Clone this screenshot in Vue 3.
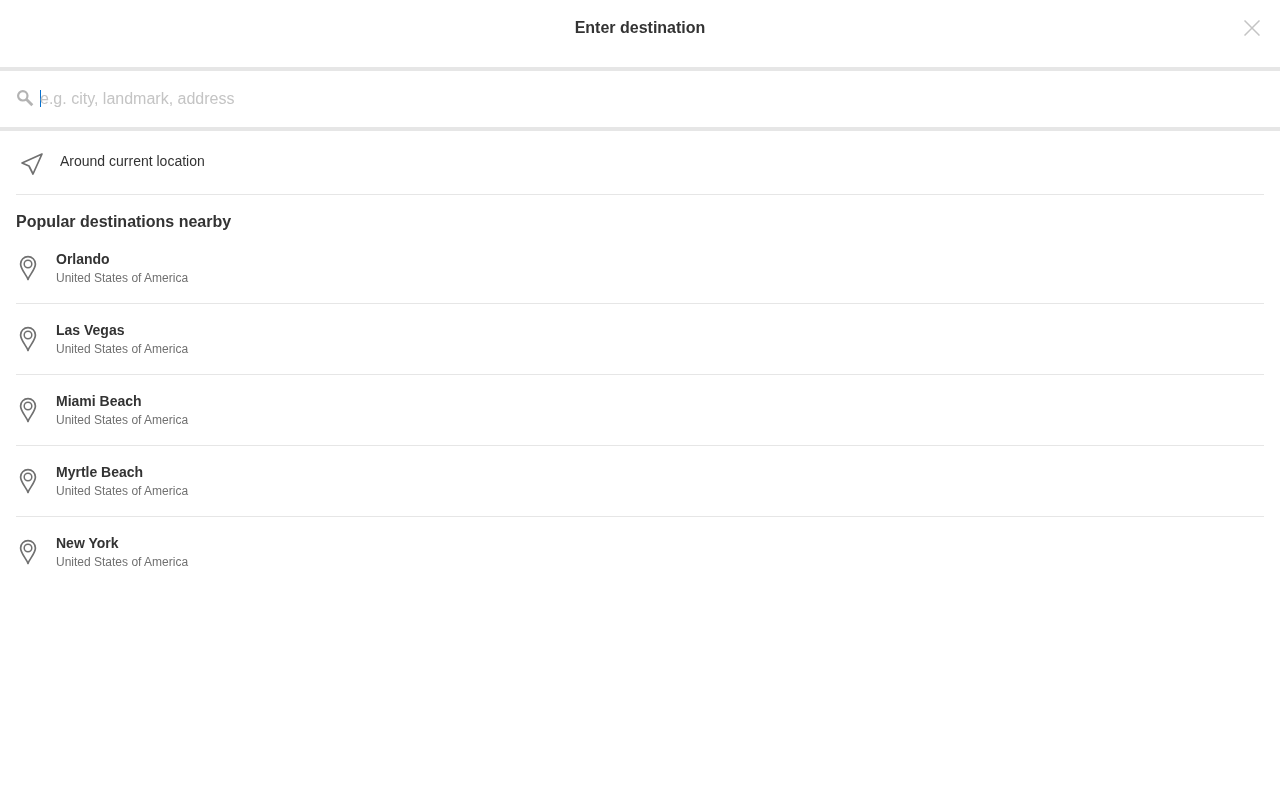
<template>
  <div class="page">
    <header class="header">
      <h1 class="title">Enter destination</h1>
      <button type="button" class="btn-close">
        <svg width="16" height="16" viewBox="0 0 16 16">
          <path d="M.5.5l15 15M15.500.5l-15 15" fill="none" stroke="#c4c4c4" stroke-width="1.5" />
        </svg>
      </button>
    </header>

    <div class="search">
      <svg class="search-icon" width="18" height="18" viewBox="0 0 18 18">
        <circle cx="6.800" cy="6.800" r="4.700" fill="none" stroke="#b3b3b3" stroke-width="2.200" />
        <path d="M10.300 10.300l6 6" fill="none" stroke="#b3b3b3" stroke-width="2.800" />
      </svg>
      <span class="caret"></span>
      <span class="placeholder">e.g. city, landmark, address</span>
    </div>

    <div class="content">
      <div class="current">
        <svg width="24" height="24" viewBox="0 0 24 24">
          <path d="M22 2L2 11l7 3 4 8z" fill="none" stroke="#707070" stroke-width="1.700" stroke-linejoin="round" />
        </svg>
        <span class="current-label">Around current location</span>
      </div>

      <h2 class="section-title">Popular destinations nearby</h2>

      <div class="list">
        <div v-for="place in places" :key="place" class="place">
          <svg class="pin" width="24" height="28" viewBox="0 0 24 28">
            <path d="M12 25.500c-1-4-7.400-10-7.400-15.500a7.400 7.400 0 0 1 14.800 0c0 5.500-6.400 11.500-7.400 15.500z" fill="none" stroke="#707070" stroke-width="1.700" stroke-linejoin="round" />
            <circle cx="12" cy="10" r="3.800" fill="none" stroke="#707070" stroke-width="1.500" />
          </svg>
          <div class="place-text">
            <div class="place-name">{{ place }}</div>
            <div class="place-country">United States of America</div>
          </div>
        </div>
      </div>
    </div>
  </div>
</template>

<script setup>
const places = ['Orlando', 'Las Vegas', 'Miami Beach', 'Myrtle Beach', 'New York']
</script>

<style>
html,
body {
  margin: 0;
  background: #fff;
}
</style>

<style scoped>
.page {
  width: 1280px;
  height: 800px;
  overflow: hidden;
  font-family: "Liberation Sans", Arial, sans-serif;
  color: #333;
  will-change: transform;
}

.header {
  position: relative;
  height: 67px;
  box-sizing: border-box;
  padding-top: 19px;
  text-align: center;
}

.title {
  margin: 0;
  font-size: 16px;
  line-height: 18px;
  font-weight: 700;
}

.btn-close {
  position: absolute;
  top: 20px;
  right: 20px;
  width: 16px;
  height: 16px;
  padding: 0;
  border: none;
  background: none;
  line-height: 0;
}

.search {
  display: flex;
  align-items: center;
  height: 56px;
  padding-left: 16px;
  border-top: 4px solid #e6e6e6;
  border-bottom: 4px solid #e6e6e6;
}

.search-icon {
  flex: none;
  margin-top: -2px;
  margin-right: 6px;
}

.caret {
  flex: none;
  width: 1px;
  height: 17px;
  margin-top: -2px;
  margin-right: -1px;
  background: #0770cd;
}

.placeholder {
  font-size: 16px;
  line-height: 18px;
  color: #c4c4c4;
}

.content {
  padding: 0 16px;
}

.current {
  display: flex;
  align-items: flex-start;
  height: 64px;
  box-sizing: border-box;
  padding: 21px 0 0 4px;
  border-bottom: 1px solid #e6e6e6;
}

.current-label {
  margin-left: 16px;
  font-size: 14px;
  line-height: 16px;
  margin-top: 1px;
}

.section-title {
  margin: 18px 0 0;
  font-size: 16px;
  line-height: 18px;
  font-weight: 700;
}

.list {
  margin-top: 2px;
}

.place {
  display: flex;
  height: 71px;
  box-sizing: border-box;
  padding-top: 18px;
  border-bottom: 1px solid #e6e6e6;
}

.place:last-child {
  border-bottom: none;
}

.pin {
  flex: none;
  margin-top: 3px;
  margin-right: 16px;
}

.place-name {
  font-size: 14px;
  line-height: 16px;
  font-weight: 700;
}

.place-country {
  margin-top: 3px;
  font-size: 12px;
  line-height: 16px;
  color: #707070;
}
</style>
